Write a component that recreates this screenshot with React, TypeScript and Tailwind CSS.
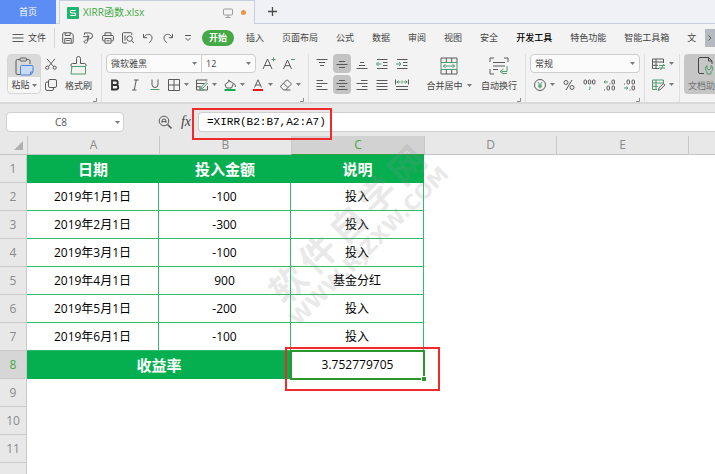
import React, { useState } from 'react';

interface IconProps {
  w?: number;
  h?: number;
  children: React.ReactNode;
}

function Icon({ w = 12, h = 12, children }: IconProps) {
  return (
    <svg
      width={w}
      height={h}
      viewBox={`0 0 ${w} ${h}`}
      fill="none"
      stroke="#5a5a5a"
      strokeWidth="1"
      className="shrink-0"
      aria-hidden="true"
    >
      {children}
    </svg>
  );
}

function Caret() {
  return (
    <svg width="5" height="3" viewBox="0 0 5 3" className="shrink-0" aria-hidden="true">
      <path d="M0 0h5L2.5 3z" fill="#7a7a7a" />
    </svg>
  );
}

interface ToolProps {
  label: string;
  active?: boolean;
  children: React.ReactNode;
}

// Single icon button
function Tool({ label, active = false, children }: ToolProps) {
  return (
    <button
      aria-label={label}
      className={`flex h-[19px] w-[18px] shrink-0 items-center justify-center rounded-sm ${active ? 'bg-[#c3c3c3]' : ''}`}
    >
      {children}
    </button>
  );
}

// Icon button with a drop-down arrow
function DropTool({ label, children }: ToolProps) {
  return (
    <button aria-label={label} className="flex h-[19px] w-7 shrink-0 items-center gap-1 pl-1">
      {children}
      <Caret />
    </button>
  );
}

function Corner() {
  return (
    <div className="flex h-2 items-end justify-end pr-1">
      <Icon w={4} h={4}>
        <path d="M3.5 0v3.5H0" stroke="#8a8a8a" />
      </Icon>
    </div>
  );
}

interface DropDownProps {
  label: string;
  options: string[];
  className: string;
}

function DropDown({ label, options, className }: DropDownProps) {
  return (
    <div className={`relative flex h-[19px] items-center border border-[#cdcdcd] bg-[#fbfbfb] ${className}`}>
      <select aria-label={label} className="h-full w-full appearance-none bg-transparent pl-1 text-[9px] leading-4 outline-none">
        {options.map((option) => (
          <option key={option}>{option}</option>
        ))}
      </select>
      <span className="pointer-events-none absolute right-1">
        <Caret />
      </span>
    </div>
  );
}

const menus = ['插入', '页面布局', '公式', '数据', '审阅', '视图', '安全', '开发工具', '特色功能', '智能工具箱', '文'];

const columns = ['A', 'B', 'C', 'D', 'E', ''];

const records = [
  { date: '2019年1月1日', amount: '-100', note: '投入' },
  { date: '2019年2月1日', amount: '-300', note: '投入' },
  { date: '2019年3月1日', amount: '-100', note: '投入' },
  { date: '2019年4月1日', amount: '900', note: '基金分红' },
  { date: '2019年5月1日', amount: '-200', note: '投入' },
  { date: '2019年6月1日', amount: '-100', note: '投入' },
];

const headCell = 'bg-[#05af50] p-0 text-[15px] font-bold text-white';
const bodyCell = 'border-b border-r border-b-[#2fbd6c] border-r-[#2fbd6c] p-0';

function TitleTabs() {
  return (
    <div className="flex h-6 shrink-0 bg-[#eff1f6]">
      <button className="w-14 shrink-0 bg-[#5b8df5] text-[9px] text-white">首页</button>
      <div className="w-[3px] shrink-0 border-b border-[#c9cede]" />
      <div className="flex w-[196px] shrink-0 items-center border-x border-t border-[#c9cede] bg-[#f3f3f3] pl-[7px] pr-2">
        <svg width="12" height="12" viewBox="0 0 12 12" fill="none" className="shrink-0" aria-hidden="true">
          <rect width="12" height="12" rx="1" fill="#1fb571" />
          <path d="M8.7 3.5H4.6a1.2 1.2 0 0 0 0 2.500h2.800a1.200 1.200 0 0 1 0 2.500H3.300" stroke="#fff" strokeWidth="1.2" />
        </svg>
        <span className="ml-1 text-[10px] text-[#3faa3f]">XIRR函数.xlsx</span>
        <span className="ml-auto">
          <Icon w={10} h={10}>
            <path d="M1.5 1h7a1 1 0 0 1 1 1v4a1 1 0 0 1-1 1h-7a1 1 0 0 1-1-1V2a1 1 0 0 1 1-1zM5 7v2M2.5 9.5h5" stroke="#9a9a9a" />
          </Icon>
        </span>
        <span className="ml-2 h-[5px] w-[5px] rounded-full bg-[#e8964a]" />
      </div>
      <div className="flex grow items-center border-b border-[#c9cede] pl-3">
        <button aria-label="新建标签">
          <Icon w={11} h={11}>
            <path d="M5.5 1v9M1 5.5h9" stroke="#4a4a4a" strokeWidth="1.3" />
          </Icon>
        </button>
      </div>
    </div>
  );
}

function MenuBar() {
  return (
    <div className="flex h-7 shrink-0 items-center overflow-hidden whitespace-nowrap text-[9px]">
      <button className="flex shrink-0 items-center gap-1 pl-3">
        <Icon>
          <path d="M.5 2.5h11M.5 6h11M.5 9.5h11" />
        </Icon>
        文件
      </button>
      <div className="ml-2 h-5 w-px shrink-0 bg-[#d5d5d5]" />
      <div className="flex shrink-0 items-center gap-2 pl-[7px]">
        <button aria-label="保存">
          <Icon>
            <path d="M1.5.8h7.7l2 2v7.4a1 1 0 0 1-1 1H1.7a1 1 0 0 1-1-1V1.6zM3.2.8v2.7h5V.8M2.8 11V6.5h6.4V11M4.3 8.5h3.4" />
          </Icon>
        </button>
        <button aria-label="输出">
          <Icon>
            <path d="M2.5 2.8V.9h5a3 3 0 0 1 0 6H5.8M1 4.7h6M5.3 3l1.9 1.7-1.9 1.8M5.8 5.5v3M5.8 8.2c-1.2-.6-3.2 0-4 1.8 1.600 2 4 1 4-1.800z" />
          </Icon>
        </button>
        <button aria-label="打印">
          <Icon>
            <path d="M3 3.500V.8h6v2.700M2.800 9H1.600a1 1 0 0 1-1-1V4.500a1 1 0 0 1 1-1h8.800a1 1 0 0 1 1 1V8a1 1 0 0 1-1 1H9.200M3 6.500h6v4.700H3zM4.500 8.800h3" />
          </Icon>
        </button>
        <button aria-label="打印预览">
          <Icon>
            <path d="M5 11H1.500a1 1 0 0 1-1-1V1.700a1 1 0 0 1 1-1h7.300a1 1 0 0 1 1 1V3M3 3.200v5.500" />
            <circle cx="7.600" cy="6.600" r="2.700" />
            <path d="M9.600 8.600l2.200 2.400" />
          </Icon>
        </button>
        <button aria-label="撤销">
          <Icon>
            <path d="M1.500 2v3.700h3.700M1.700 5.500C3.500 2.500 6 1.800 8 2.700c3 1.400 2.600 5.300-.8 8" />
          </Icon>
        </button>
        <button aria-label="恢复">
          <Icon>
            <path d="M10.500 2v3.700H6.800M10.300 5.500C8.500 2.500 6 1.800 4 2.700c-3 1.400-2.600 5.300.8 8" />
          </Icon>
        </button>
        <button aria-label="自定义快速访问" className="px-0.5">
          <Icon w={8} h={8}>
            <path d="M1 1.500h6M1.500 4L4 6.500 6.500 4" />
          </Icon>
        </button>
      </div>
      <button className="ml-2 h-4 w-8 shrink-0 rounded-full bg-[#45a846] font-bold text-white">开始</button>
      <nav className="flex min-w-0 grow gap-[18px] overflow-hidden pl-3">
        {menus.map((menu) => (
          <button key={menu} className={`shrink-0 ${menu === '开发工具' ? 'font-medium text-black' : ''}`}>
            {menu}
          </button>
        ))}
      </nav>
      <button aria-label="更多" className="flex h-[18px] w-[10px] shrink-0 items-center justify-center bg-[#b5b9c2]">
        <Icon w={4} h={6}>
          <path d="M.5.5L3 3 .5 5.500" />
        </Icon>
      </button>
    </div>
  );
}

function ClipboardGroup() {
  return (
    <div className="flex w-[101px] shrink-0 flex-col pl-[7px]">
      <div className="flex gap-1">
        <button className="flex h-10 w-[34px] shrink-0 flex-col items-center rounded-sm border border-[#d6d6d6] bg-[#f7f7f7]">
          <span className="flex h-[22px] w-full items-center justify-center bg-[#d9d9d9]">
            <Icon w={19} h={19}>
              <path d="M5 2.500H2.500a1.500 1.500 0 0 0-1.500 1.500v12a1.500 1.500 0 0 0 1.500 1.500H6M12 2.500h1.500A1.500 1.500 0 0 1 15 4v3" />
              <rect x="5" y="1" width="6.500" height="3" rx="1" />
              <path d="M7 8.500h10a1 1 0 0 1 1 1v5.500l-2.500 3H6.500a1 1 0 0 1-1-1v-7.500a1 1 0 0 1 1.500-1z" fill="#c9dcf5" stroke="#4a86d8" />
              <path d="M18 15h-2.500v3" stroke="#4a86d8" />
            </Icon>
          </span>
          <span className="flex grow items-center gap-0.5">
            粘贴
            <Caret />
          </span>
        </button>
        <div className="flex w-3 shrink-0 flex-col gap-0.5">
          <button aria-label="剪切" className="flex h-[19px] items-center">
            <Icon>
              <path d="M2 .8l6.800 8M10 .8l-6.800 8" />
              <circle cx="2.300" cy="9.700" r="1.600" />
              <circle cx="9.700" cy="9.700" r="1.600" />
            </Icon>
          </button>
          <button aria-label="复制" className="flex h-[19px] items-center">
            <Icon>
              <rect x="3.500" y=".5" width="8" height="8" rx="1.500" />
              <path d="M3.500 3H2a1.500 1.500 0 0 0-1.500 1.500V10A1.500 1.500 0 0 0 2 11.500h5A1.500 1.500 0 0 0 8.500 10V8.500" />
            </Icon>
          </button>
        </div>
        <button className="ml-1 flex h-10 shrink-0 flex-col items-center">
          <span className="flex h-[23px] items-center">
            <Icon w={17} h={19}>
              <path d="M1 10V9a1.500 1.500 0 0 1 1.500-1.500h4V2.500a2 2 0 0 1 4 0v5h4A1.500 1.500 0 0 1 16 9v1" />
              <path d="M1 10.500h15M2 10.500L1 18h14.500V10.500" stroke="#4f9a70" />
            </Icon>
          </span>
          <span className="flex grow items-center">格式刷</span>
        </button>
      </div>
      <Corner />
    </div>
  );
}

function FontGroup() {
  return (
    <div className="flex w-[207px] shrink-0 flex-col border-l border-[#dedede] pl-1">
      <div className="flex">
        <DropDown label="字体" options={['微软雅黑', '宋体']} className="w-[96px] rounded-l" />
        <DropDown label="字号" options={['12', '14']} className="-ml-px w-[55px] rounded-r" />
        <div className="flex gap-0.5 pl-1">
          <Tool label="增大字号">
            <Icon w={14} h={13}>
              <path d="M1 12L5.500 2 10 12M2.700 8.500h5.600" />
              <path d="M11.500.500v4M9.500 2.500h4" stroke="#4f9a70" />
            </Icon>
          </Tool>
          <Tool label="减小字号">
            <Icon w={14} h={13}>
              <path d="M1.500 12L5.500 3l4 9M3 8.700h5" />
              <path d="M9 2.500h4" stroke="#4f9a70" />
            </Icon>
          </Tool>
        </div>
      </div>
      <div className="mt-0.5 flex">
        <div className="flex gap-0.5">
          <Tool label="加粗">
            <Icon>
              <path d="M3 1.500h3.500a2.200 2.200 0 0 1 0 4.500H3zM3 6h4a2.200 2.200 0 0 1 0 4.500H3z" stroke="#333" strokeWidth="1.800" />
            </Icon>
          </Tool>
          <Tool label="倾斜">
            <Icon>
              <path d="M5 1h4.500M3 11h4.500M7.300 1L5.200 11" />
            </Icon>
          </Tool>
          <Tool label="下划线">
            <Icon>
              <path d="M3 .5v5a3 3 0 0 0 6 0v-5" />
              <path d="M1.500 10.500h9" stroke="#4f9a70" />
            </Icon>
          </Tool>
        </div>
        <DropTool label="边框">
          <Icon>
            <path d="M.5.5h11v11H.5zM6 .5v11M.5 6h11" />
          </Icon>
        </DropTool>
        <DropTool label="绘制表格">
          <Icon>
            <path d="M11.500 1H.500v10h11V7M.500 4.500h8M.500 7.700h4M4 7.500V11" />
            <path d="M5 9.500l.5-2L11 2.500M5 9.500l2-.5 4.800-5M3 11h6" stroke="#4f9a70" />
          </Icon>
        </DropTool>
        <DropTool label="填充颜色">
          <Icon>
            <path d="M4 1l5.500 3.500-2 4.500h-5L1 5.500 6 1.700M9.800 4.500c1.400.8 1.700 2 1.400 3.500" />
            <path d="M.5 11h11" stroke="#0faf50" strokeWidth="2" />
          </Icon>
        </DropTool>
        <DropTool label="字体颜色">
          <Icon>
            <path d="M2.500 8.500L6 .8l3.500 7.700M3.700 6h4.600" />
            <path d="M1 11h10" stroke="#f01414" strokeWidth="2" />
          </Icon>
        </DropTool>
        <DropTool label="清除">
          <Icon>
            <path d="M7.500 1L11 4.500a.8.8 0 0 1 0 1L5.500 11h-2L.8 8a.8.8 0 0 1 0-1L6.500 1a.8.8 0 0 1 1 0zM3.500 4.200l4.300 4.300M5.500 11h5" />
          </Icon>
        </DropTool>
      </div>
      <Corner />
    </div>
  );
}

function AlignGroup() {
  return (
    <div className="flex w-[217px] shrink-0 flex-col border-l border-[#dedede] pl-1">
      <div className="flex">
        <div className="flex w-[108px] flex-col gap-0.5">
          <div className="flex gap-0.5">
            <Tool label="顶端对齐">
              <Icon>
                <path d="M.5 1.500h11M3 4.500h6M4 7.500h4" />
              </Icon>
            </Tool>
            <Tool label="垂直居中" active>
              <Icon>
                <path d="M3 3.500h6M.5 6.500h11M3 9.500h6" />
              </Icon>
            </Tool>
            <Tool label="底端对齐">
              <Icon>
                <path d="M4 4.500h4M3 7.500h6M.5 10.500h11" />
              </Icon>
            </Tool>
            <Tool label="减少缩进">
              <Icon>
                <path d="M1 1.500h10.500M7 4.500h4.500M7 7.500h4.500M1 10.500h10.500" />
                <path d="M5.500 6h-5M2.500 4l-2 2 2 2" stroke="#4f9a70" />
              </Icon>
            </Tool>
            <Tool label="增加缩进">
              <Icon>
                <path d="M1 1.500h10.500M7 4.500h4.500M7 7.500h4.500M1 10.500h10.500" />
                <path d="M0 6h5M3 4l2 2-2 2" stroke="#4f9a70" />
              </Icon>
            </Tool>
          </div>
          <div className="flex gap-0.5">
            <Tool label="左对齐">
              <Icon>
                <path d="M.5 1.500H7M.5 4.500h11M.5 7.500H6M.5 10.500h11" />
              </Icon>
            </Tool>
            <Tool label="水平居中" active>
              <Icon>
                <path d="M3 1.500h6M.5 4.500h11M3 7.500h6M.5 10.500h11" />
              </Icon>
            </Tool>
            <Tool label="右对齐">
              <Icon>
                <path d="M5 1.500h6.500M.5 4.500h11M6 7.500h5.500M.5 10.500h11" />
              </Icon>
            </Tool>
            <Tool label="两端对齐">
              <Icon>
                <path d="M.5 1.500h11M.5 4.500h11M.5 7.500h11M.5 10.500h11" />
              </Icon>
            </Tool>
            <Tool label="分散对齐">
              <Icon w={14}>
                <path d="M1 7.500h12M1 10.500h12M.5.500v5M13.500.500v5" />
                <path d="M1.500 3h4M8.500 3h4M3.500 1.500L2 3l1.500 1.500M10.500 1.500L12 3l-1.500 1.500M7 1.500v3" stroke="#4f9a70" />
              </Icon>
            </Tool>
          </div>
        </div>
        <button className="ml-1 flex h-10 w-12 shrink-0 flex-col items-center">
          <span className="flex h-[23px] items-center">
            <Icon w={18} h={18}>
              <path d="M1 1h16v4.500H1zM1 12.500h16V17H1zM6.300 1v4.500M11.700 1v4.500M6.300 12.500V17M11.700 12.500V17" />
              <path d="M1 5.500h16v7H1zM3.500 9h11M5.500 7l-2 2 2 2M12.500 7l2 2-2 2" stroke="#4f9a70" />
            </Icon>
          </span>
          <span className="flex grow items-center gap-1">
            合并居中
            <Caret />
          </span>
        </button>
        <button className="ml-1.5 flex h-10 w-10 shrink-0 flex-col items-center">
          <span className="flex h-[23px] items-center">
            <Icon w={20} h={18}>
              <path d="M5 1H1v4M15 1h4v4M1 12v5h4M4 5.500h12M4 9h12M4 12.500h5" />
              <path d="M18 9v5.500h-5.500M14.500 12L11 14.500l3.500 2.500M14 16.500h4" stroke="#4f9a70" />
            </Icon>
          </span>
          <span className="flex grow items-center">自动换行</span>
        </button>
      </div>
      <Corner />
    </div>
  );
}

function NumberGroup() {
  return (
    <div className="flex w-[119px] shrink-0 flex-col border-l border-[#dedede] pl-1">
      <DropDown label="数字格式" options={['常规', '数值', '货币']} className="w-[110px] rounded" />
      <div className="mt-0.5 flex gap-0.5">
        <DropTool label="货币">
          <Icon>
            <circle cx="6" cy="6" r="5.500" />
            <path d="M3.800 3L6 5.700 8.200 3M6 5.700V9.500M4 6.200h4M4 7.800h4" stroke="#4f9a70" />
          </Icon>
        </DropTool>
        <Tool label="百分比">
          <Icon>
            <circle cx="3" cy="3.500" r="2" />
            <circle cx="9" cy="8.500" r="2" />
            <path d="M9 1L3 11" />
          </Icon>
        </Tool>
        <Tool label="千位分隔">
          <Icon w={13}>
            <rect x="1" y="1" width="2.500" height="4" rx="1" />
            <rect x="5.300" y="1" width="2.500" height="4" rx="1" />
            <rect x="9.500" y="1" width="2.500" height="4" rx="1" />
            <path d="M7 7.500v2L6 11" stroke="#4f9a70" />
          </Icon>
        </Tool>
        <Tool label="增加小数位">
          <Icon w={13}>
            <rect x="9" y="1" width="2.500" height="4" rx="1" />
            <rect x="4" y="7" width="2.500" height="4" rx="1" />
            <rect x="9" y="7" width="2.500" height="4" rx="1" />
            <path d="M6.500 5h1M1 11h1" />
            <path d="M5 3H1M2.500 1.500L1 3l1.500 1.500" stroke="#4f9a70" />
          </Icon>
        </Tool>
        <Tool label="减少小数位">
          <Icon w={13}>
            <rect x="4" y="1" width="2.500" height="4" rx="1" />
            <rect x="9" y="1" width="2.500" height="4" rx="1" />
            <rect x="9" y="7" width="2.500" height="4" rx="1" />
            <path d="M1 5h1M6.500 11h1" />
            <path d="M1 9h4M3.500 7.500L5 9l-1.500 1.500" stroke="#4f9a70" />
          </Icon>
        </Tool>
      </div>
      <Corner />
    </div>
  );
}

function Ribbon() {
  return (
    <div className="flex shrink-0 overflow-hidden whitespace-nowrap border-b-2 border-[#d9d9d9] pt-0.5 text-[9px]">
      <ClipboardGroup />
      <FontGroup />
      <AlignGroup />
      <NumberGroup />
      <div className="flex w-[35px] shrink-0 flex-col gap-0.5 border-l border-[#dedede] pl-[3px]">
        <DropTool label="条件格式">
          <Icon w={13}>
            <path d="M7 10.500H.500V1h11v4M.500 4h11M.500 7.300H6M4 1v9.500" />
            <path d="M7 7.500h6M7 10h6M12 6l-3.500 6" stroke="#4f9a70" />
          </Icon>
        </DropTool>
        <DropTool label="表格样式">
          <Icon w={13}>
            <path d="M5 10.500H.500V1h11v3M.500 4h11M.500 7.300H6M4 1v9.500" stroke="#4f9a70" />
            <path d="M6.500 11.300l.5-2.500 4.500-4.300 1.300 1.500L8.500 10.500z" />
          </Icon>
        </DropTool>
      </div>
      <div className="flex min-w-0 grow border-l border-[#dedede] pl-1">
        <button className="flex h-10 w-11 shrink-0 flex-col items-center rounded-sm bg-[#c6c6c6] text-[#707070]">
          <span className="flex h-[23px] items-center">
            <Icon w={18} h={19}>
              <path d="M7 17.500H3A1.500 1.500 0 0 1 1.500 16V3A1.500 1.500 0 0 1 3 1.500h8.500L15 5v3M11.500 1.500V5H15" stroke="#444" />
              <path d="M10 9.500v3l2 1.500 2-1.500v-3a3.500 3.500 0 0 1 0 6V18h-4v-2.500a3.500 3.500 0 0 1 0-6z" stroke="#4f9a70" />
            </Icon>
          </span>
          <span className="flex grow items-center">文档助手</span>
        </button>
      </div>
    </div>
  );
}

interface FormulaBarProps {
  formula: string;
  onChange: (value: string) => void;
}

function FormulaBar({ formula, onChange }: FormulaBarProps) {
  return (
    <div className="flex shrink-0 items-center bg-[#e8e8e8] pb-1 pl-1.5 pt-2">
      <div className="relative flex w-[118px] shrink-0 items-center">
        <input
          aria-label="名称框"
          defaultValue="C8"
          className="h-5 w-full rounded border border-[#cfcfcf] bg-white pr-2 text-center text-[10px] text-[#555] outline-none"
        />
        <span className="pointer-events-none absolute right-1">
          <Caret />
        </span>
      </div>
      <button aria-label="查找" className="ml-[34px] shrink-0">
        <Icon w={14} h={14}>
          <circle cx="6" cy="6" r="4.800" />
          <path d="M9.500 9.500l4 3.800" strokeWidth="1.600" />
          <path d="M4 8V6a2 2 0 0 1 4 0v2M4 6.500h4" />
        </Icon>
      </button>
      <button className="ml-1.5 w-4 shrink-0 font-[Liberation_Serif,serif] text-[14px] italic leading-5">fx</button>
      <div className="relative ml-1 min-w-0 grow">
        <input
          aria-label="编辑栏"
          value={formula}
          onChange={(e) => onChange(e.target.value)}
          className="block h-5 w-full rounded-l border border-r-0 border-[#cfcfcf] bg-white pl-2 font-[Liberation_Mono,monospace] text-[11px] text-black outline-none"
        />
        <div className="pointer-events-none absolute -left-1.5 -top-1 z-20 h-8 w-[140px] border-2 border-[#f02a2a]" />
      </div>
    </div>
  );
}

function RowHead({ n, active = false }: { n?: number; active?: boolean }) {
  return (
    <th
      scope="row"
      className={`h-7 border-b border-r border-[#c9c9c9] p-0 text-[12px] font-normal ${active ? 'bg-[#d6d6d6] text-[#45a846]' : 'bg-[#e8e8e8] text-[#8a8a8a]'}`}
    >
      {n}
    </th>
  );
}

function Sheet() {
  return (
    <div className="relative grow bg-white">
      <table className="w-full table-fixed border-separate border-spacing-0 text-center text-[12px] leading-4 text-black">
        <colgroup>
          <col className="w-[27px]" />
          <col className="w-[132px]" />
          <col className="w-[132px]" />
          <col className="w-[133px]" />
          <col className="w-[132px]" />
          <col className="w-[132px]" />
          <col />
        </colgroup>
        <thead>
          <tr className="bg-[#e8e8e8] text-[#8a8a8a]">
            <th className="h-[19px] border-b border-[#c4c4c4] p-0">
              <div className="ml-3.5">
                <Icon w={9} h={9}>
                  <path d="M9 0v9H0z" fill="#b0b0b0" stroke="none" />
                </Icon>
              </div>
            </th>
            {columns.map((column) => (
              <th
                key={column}
                scope="col"
                className={`h-[19px] border-b border-l p-0 font-normal ${column === 'C' ? 'border-b-[#2f9e3f] border-l-[#c9c9c9] bg-[#d2d2d2] text-[#45a846]' : 'border-b-[#c4c4c4] border-l-[#c9c9c9]'}`}
              >
                {column}
              </th>
            ))}
          </tr>
        </thead>
        <tbody>
          <tr>
            <RowHead n={1} />
            <td className={headCell}>日期</td>
            <td className={headCell}>投入金额</td>
            <td className={headCell}>说明</td>
          </tr>
          {records.map((record, index) => (
            <tr key={record.date}>
              <RowHead n={index + 2} />
              <td className={bodyCell}>{record.date}</td>
              <td className={bodyCell}>{record.amount}</td>
              <td className={bodyCell}>{record.note}</td>
            </tr>
          ))}
          <tr>
            <RowHead n={8} active />
            <td colSpan={2} className={headCell}>收益率</td>
            <td className="relative p-0">
              3.752779705
              {/* Selection frame with its fill handle */}
              <div className="pointer-events-none absolute -inset-px border-2 border-[#2b962b]">
                <div className="absolute -bottom-[3px] -right-[3px] h-[5px] w-[5px] border-l border-t border-white bg-[#2b962b]" />
              </div>
              <div className="pointer-events-none absolute -bottom-3 -left-1.5 -right-4 -top-1 z-20 border-2 border-[#f02a2a]" />
            </td>
          </tr>
          <tr>
            <RowHead n={9} />
          </tr>
          <tr>
            <RowHead n={10} />
          </tr>
          <tr>
            <RowHead n={11} />
          </tr>
          <tr>
            <RowHead />
          </tr>
        </tbody>
      </table>
      {/* Diagonal watermark */}
      <div
        aria-hidden="true"
        className="pointer-events-none absolute left-[235px] top-[66px] z-10 flex w-[240px] -rotate-45 flex-col items-center font-bold text-[#8c8c8c]/20"
      >
        <div className="flex gap-1.5 text-[36px] leading-10">
          {['软', '件', '自', '学', '网'].map((char) => (
            <span key={char}>{char}</span>
          ))}
        </div>
        <div className="font-[DejaVu_Sans,sans-serif] text-[21px] leading-5">WWW.RJZXW.COM</div>
      </div>
    </div>
  );
}

export default function App() {
  const [formula, setFormula] = useState('=XIRR(B2:B7,A2:A7)');

  return (
    <div className="flex h-screen flex-col overflow-hidden bg-[#f3f3f3] font-['Open_Sans','Noto_Sans_CJK_SC',sans-serif] text-[#444]">
      <TitleTabs />
      <MenuBar />
      <Ribbon />
      <FormulaBar formula={formula} onChange={setFormula} />
      <Sheet />
    </div>
  );
}
